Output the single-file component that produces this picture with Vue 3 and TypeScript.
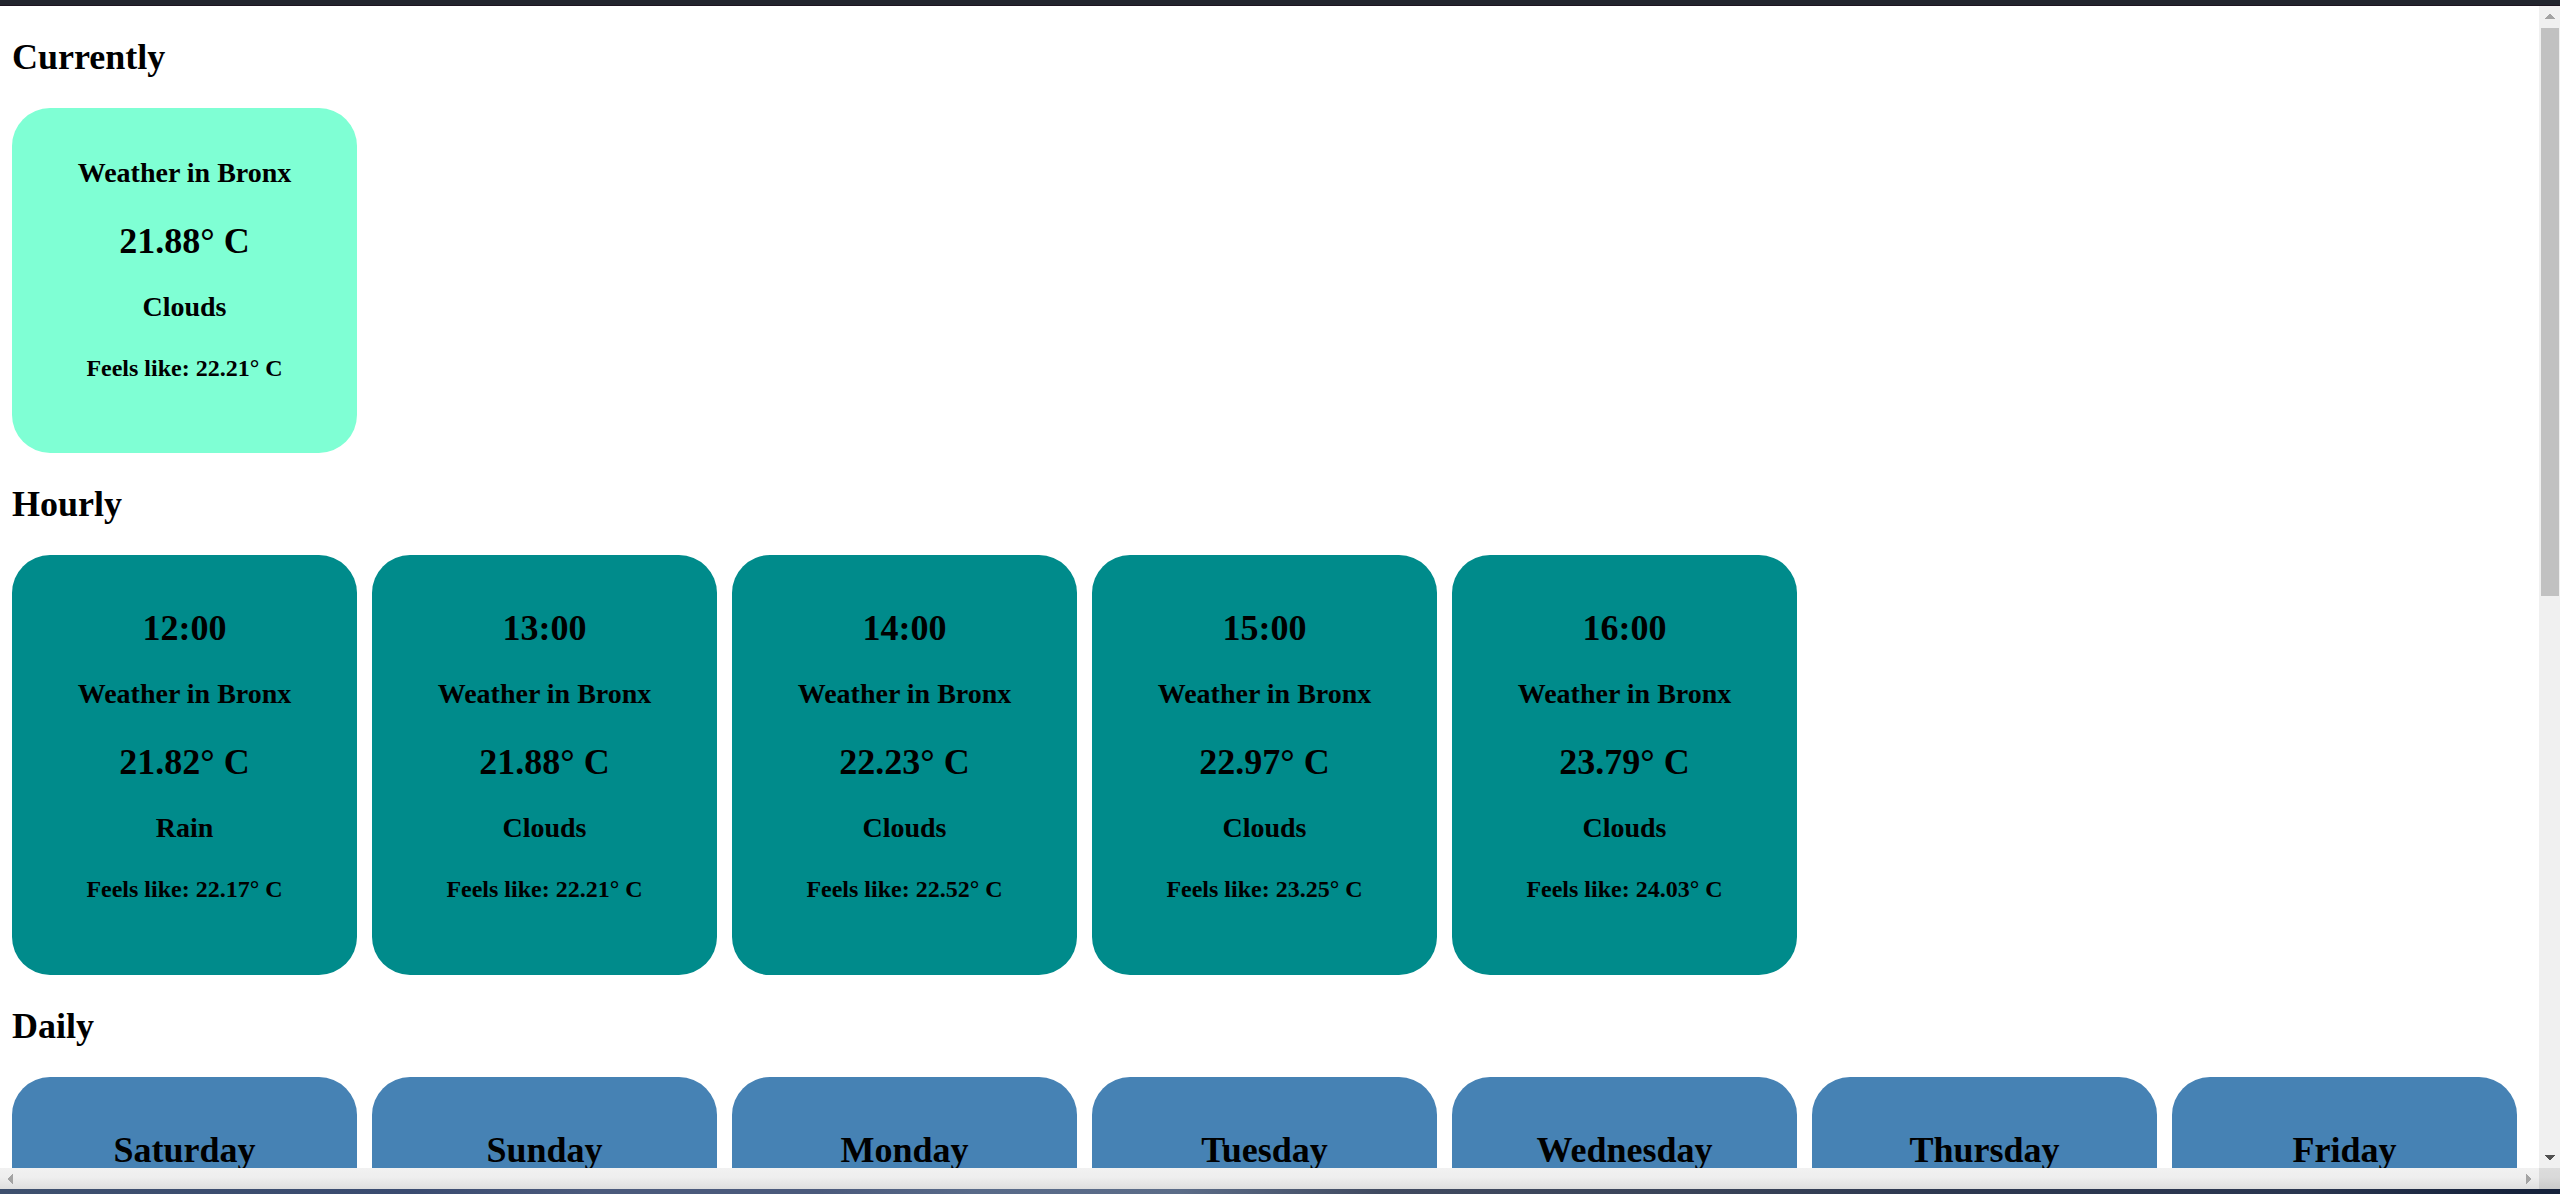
<script setup lang="ts">
interface Forecast {
  title?: string
  temp: string
  sky: string
  feels: string
}

const city = 'Bronx'

const current: Forecast = { temp: '21.88', sky: 'Clouds', feels: '22.21' }

const hourly: Forecast[] = [
  { title: '12:00', temp: '21.82', sky: 'Rain', feels: '22.17' },
  { title: '13:00', temp: '21.88', sky: 'Clouds', feels: '22.21' },
  { title: '14:00', temp: '22.23', sky: 'Clouds', feels: '22.52' },
  { title: '15:00', temp: '22.97', sky: 'Clouds', feels: '23.25' },
  { title: '16:00', temp: '23.79', sky: 'Clouds', feels: '24.03' },
]

const days: string[] = [
  'Saturday',
  'Sunday',
  'Monday',
  'Tuesday',
  'Wednesday',
  'Thursday',
  'Friday',
]
</script>

<template>
  <div class="window">
    <div class="top-edge"></div>
    <div class="middle">
      <main class="page">
        <h2>Currently</h2>
        <section class="row">
          <article class="card now">
            <h3>Weather in {{ city }}</h3>
            <h2>{{ current.temp }}° C</h2>
            <h3>{{ current.sky }}</h3>
            <h4>Feels like: {{ current.feels }}° C</h4>
          </article>
        </section>

        <h2>Hourly</h2>
        <section class="row">
          <article v-for="hour in hourly" :key="hour.title" class="card hour">
            <h2>{{ hour.title }}</h2>
            <h3>Weather in {{ city }}</h3>
            <h2>{{ hour.temp }}° C</h2>
            <h3>{{ hour.sky }}</h3>
            <h4>Feels like: {{ hour.feels }}° C</h4>
          </article>
        </section>

        <h2>Daily</h2>
        <section class="row">
          <article v-for="day in days" :key="day" class="card day">
            <h2>{{ day }}</h2>
          </article>
        </section>
      </main>

      <div class="vbar">
        <button type="button" aria-label="Scroll up">
          <svg width="10" height="5" viewBox="0 0 10 5"><path d="M4 0h2v1h1v1h1v1h1v1h1v1H0v-1h1v-1h1v-1h1v-1h1z" fill="#a3a3a3" /></svg>
        </button>
        <div class="track">
          <div class="thumb"></div>
        </div>
        <button type="button" aria-label="Scroll down">
          <svg width="10" height="5" viewBox="0 0 10 5"><path d="M0 0h10v1h-1v1h-1v1h-1v1h-1v1h-2v-1h-1v-1h-1v-1h-1v-1h-1z" fill="#505050" /></svg>
        </button>
      </div>
    </div>

    <div class="bottom">
      <div class="hbar">
        <button type="button" aria-label="Scroll left">
          <svg width="5" height="10" viewBox="0 0 5 10"><path d="M0 4v2h1v1h1v1h1v1h1v1h1V0h-1v1h-1v1h-1v1h-1v1z" fill="#a3a3a3" /></svg>
        </button>
        <button type="button" aria-label="Scroll right">
          <svg width="5" height="10" viewBox="0 0 5 10"><path d="M0 0v10h1v-1h1v-1h1v-1h1v-1h1v-2h-1v-1h-1v-1h-1v-1h-1v-1z" fill="#a3a3a3" /></svg>
        </button>
      </div>
      <div class="corner"></div>
    </div>
    <div class="bottom-edge"></div>
  </div>
</template>

<style>
body {
  margin: 0;
}
</style>

<style scoped>
.window {
  display: flex;
  flex-direction: column;
  height: 100vh;
  overflow: hidden;
  background: #fff;
  color: #000;
  font-family: "Liberation Serif", "Times New Roman", serif;
}

.top-edge {
  flex: none;
  box-sizing: border-box;
  height: 6px;
  background: #22252e;
  border-bottom: 1px solid #1d1420;
}

.middle {
  flex: 1;
  display: flex;
  min-height: 0;
}

.page {
  flex: 1;
  min-width: 0;
  padding: 0 12px;
  overflow: hidden;
}

h2,
h3,
h4 {
  font-weight: bold;
}

h2 {
  margin: 30px 0;
  font-size: 36px;
  line-height: 42px;
}

h3 {
  margin: 28px 0 32px;
  font-size: 28px;
  line-height: 30px;
}

h4 {
  margin: 32px 0;
  font-size: 24px;
  line-height: 29px;
}

.row {
  display: flex;
  gap: 15px;
}

.card {
  flex: none;
  box-sizing: border-box;
  width: 345px;
  min-height: 345px;
  padding: 22px;
  border-radius: 38px;
  text-align: center;
}

.now {
  background: aquamarine;
}

.hour {
  min-height: 420px;
  background: darkcyan;
}

.day {
  min-height: 420px;
  background: steelblue;
}

button {
  display: flex;
  flex: none;
  align-items: center;
  justify-content: center;
  box-sizing: border-box;
  width: 21px;
  height: 21px;
  padding: 0 1px 0 0;
  border: 0;
  background: transparent;
}

svg {
  display: block;
  flex: none;
}

.vbar {
  flex: none;
  display: flex;
  flex-direction: column;
  width: 21px;
  background: #f0f0f0;
}

.vbar button {
  padding: 0 0 0 1px;
}

.track {
  flex: 1;
  padding: 1px 1px 0 2px;
}

.thumb {
  height: calc(50% + 8px);
  background: #c1c1c1;
}

.bottom {
  flex: none;
  display: flex;
  height: 21px;
}

.hbar {
  flex: 1;
  display: flex;
  justify-content: space-between;
  background: linear-gradient(#f1f1f1 0%, #eeeeee 45%, #dedede 100%);
}

.hbar button {
  padding: 1px 0 0;
}

.corner {
  width: 21px;
  background: linear-gradient(#dcdcdc 0%, #d9d9d9 45%, #cacaca 100%);
}

.bottom-edge {
  flex: none;
  height: 5px;
  background: linear-gradient(
    90deg,
    #3e506e 0%,
    #3a4b70 16%,
    #4b5a7c 23%,
    #4b5a7c 32%,
    #586a89 38%,
    #5b6c88 46%,
    #404a60 54%,
    #3a4459 66%,
    #2d3850 76%,
    #2a3650 90%,
    #16223b 98%
  );
}
</style>
